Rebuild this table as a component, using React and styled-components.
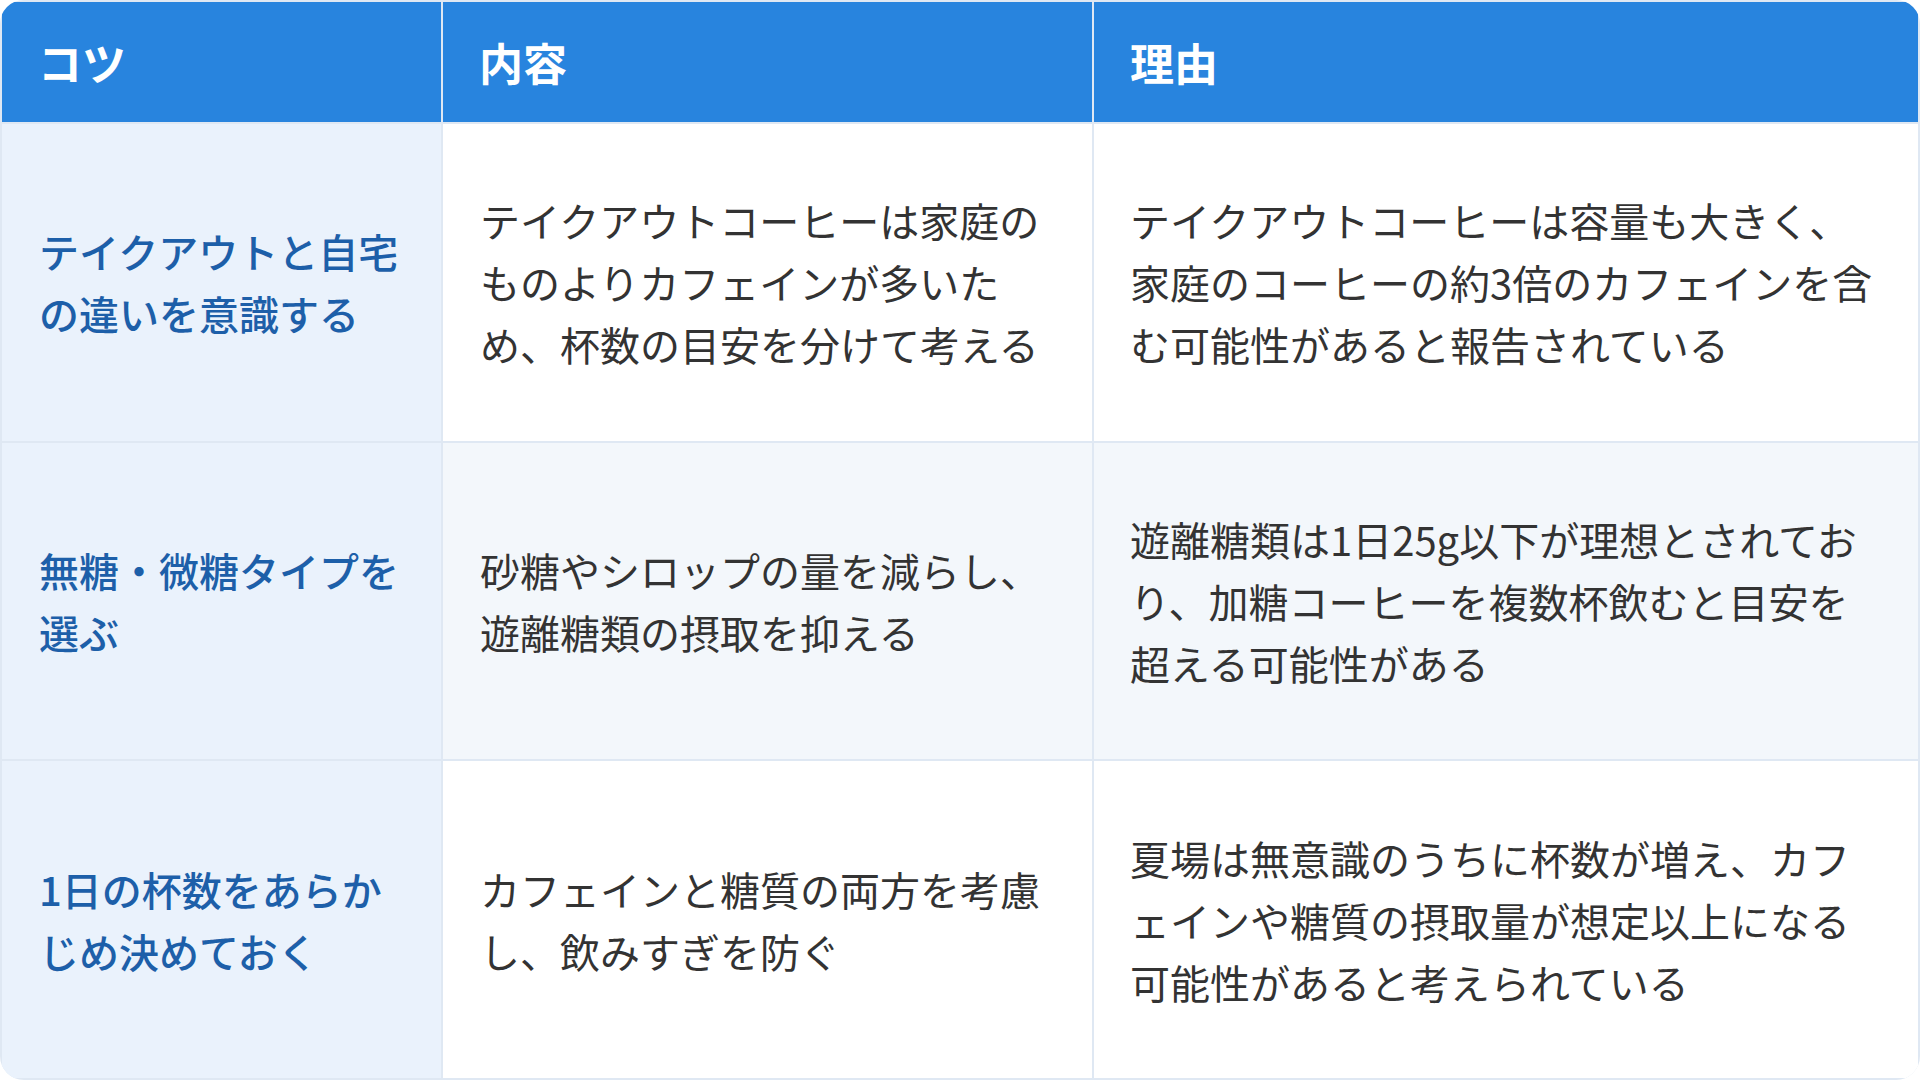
import React from "react";
import styled, { createGlobalStyle } from "styled-components";

const GlobalStyle = createGlobalStyle`
  html, body {
    margin: 0;
    padding: 0;
    background: #ffffff;
  }
  body {
    font-family: "Noto Sans CJK JP", "Noto Sans", sans-serif;
  }
  * { box-sizing: border-box; }
`;

const Table = styled.div`
  width: 1920px;
  height: 1080px;
  display: grid;
  grid-template-columns: 439px 649px 1fr;
  grid-template-rows: 120px 1fr 1fr 1fr;
  gap: 2px;
  padding: 2px;
  background: #dfe8f3;
  border-radius: 24px;
  overflow: hidden;
`;

const HeaderCell = styled.div`
  background: #2884de;
  color: #ffffff;
  font-size: 44px;
  font-weight: 700;
  line-height: 1.5;
  display: flex;
  align-items: center;
  padding: 0 36px;
`;

const TipCell = styled.div`
  background: #eaf2fc;
  color: #1d5fa9;
  font-size: 40px;
  font-weight: 500;
  line-height: 62px;
  display: flex;
  align-items: center;
  padding: 0 34px 0 37px;
`;

const BodyCell = styled.div`
  background: ${(p) => (p.$shade ? "#f3f7fb" : "#ffffff")};
  color: #333333;
  font-size: 40px;
  font-weight: 400;
  line-height: 62px;
  display: flex;
  align-items: center;
  padding: ${(p) => (p.$wide ? "0 34px 0 36px" : "0 38px 0 37px")};
`;

const CellText = styled.span`
  display: block;
  width: 100%;
`;

const rows = [
  {
    tip: "テイクアウトと自宅の違いを意識する",
    content: "テイクアウトコーヒーは家庭のものよりカフェインが多いため、杯数の目安を分けて考える",
    reason: "テイクアウトコーヒーは容量も大きく、家庭のコーヒーの約3倍のカフェインを含む可能性があると報告されている",
  },
  {
    tip: "無糖・微糖タイプを選ぶ",
    content: "砂糖やシロップの量を減らし、遊離糖類の摂取を抑える",
    reason: "遊離糖類は1日25g以下が理想とされており、加糖コーヒーを複数杯飲むと目安を超える可能性がある",
  },
  {
    tip: "1日の杯数をあらかじめ決めておく",
    content: "カフェインと糖質の両方を考慮し、飲みすぎを防ぐ",
    reason: "夏場は無意識のうちに杯数が増え、カフェインや糖質の摂取量が想定以上になる可能性があると考えられている",
  },
];

export default function App() {
  return (
    <>
      <GlobalStyle />
      <Table role="table">
        <HeaderCell role="columnheader">コツ</HeaderCell>
        <HeaderCell role="columnheader">内容</HeaderCell>
        <HeaderCell role="columnheader">理由</HeaderCell>
        {rows.map((r, i) => (
          <React.Fragment key={i}>
            <TipCell role="rowheader">
              <CellText>{r.tip}</CellText>
            </TipCell>
            <BodyCell role="cell" $shade={i === 1}>
              <CellText>{r.content}</CellText>
            </BodyCell>
            <BodyCell role="cell" $shade={i === 1} $wide>
              <CellText>{r.reason}</CellText>
            </BodyCell>
          </React.Fragment>
        ))}
      </Table>
    </>
  );
}
